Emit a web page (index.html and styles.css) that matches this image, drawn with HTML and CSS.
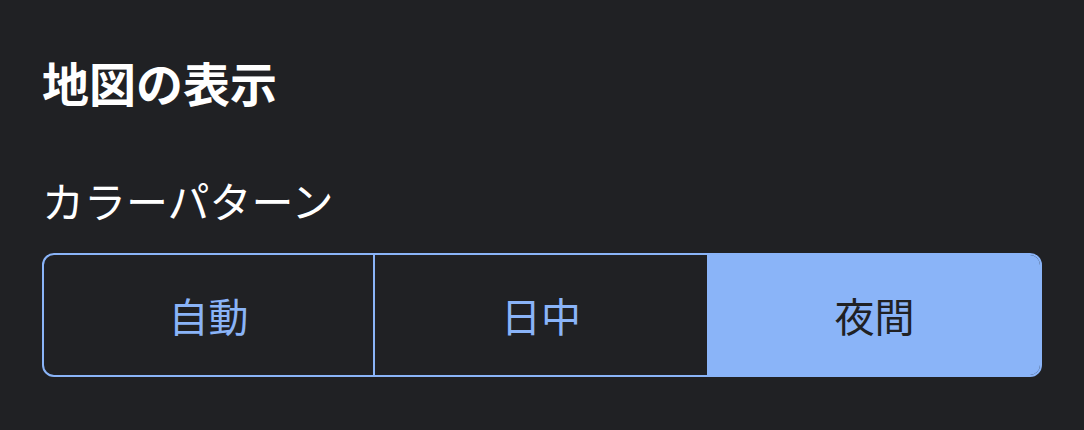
FILE: index.html
```html
<!DOCTYPE html>
<html lang="ja">
<head>
<meta charset="utf-8">
<link rel="stylesheet" href="styles.css">
</head>
<body>
<main class="panel">
  <h1 class="title">地図の表示</h1>
  <h2 class="label">カラーパターン</h2>
  <div class="segmented" role="radiogroup">
    <button class="seg">自動</button>
    <button class="seg">日中</button>
    <button class="seg seg-selected">夜間</button>
  </div>
</main>
</body>
</html>
```

FILE: styles.css
```css
html, body {
  margin: 0;
  background: #202124;
}
body {
  width: 1084px;
  height: 430px;
  overflow: hidden;
  font-family: "Noto Sans CJK JP", "Noto Sans", sans-serif;
}
.panel {
  padding: 54px 42px 0 42px;
}
.title {
  margin: 0;
  font-size: 47px;
  line-height: 56px;
  font-weight: 700;
  color: #ffffff;
}
.label {
  margin: 66px 0 0 0;
  font-size: 42px;
  line-height: 48px;
  font-weight: 400;
  color: #ffffff;
}
.segmented {
  margin-top: 29px;
  display: grid;
  grid-template-columns: 329px 334px 1fr;
  height: 124px;
  box-sizing: border-box;
  border: 2px solid #8ab4f8;
  border-radius: 12px;
  overflow: hidden;
}
.seg {
  margin: 0;
  padding: 0;
  border: none;
  background: transparent;
  font-family: inherit;
  font-size: 40px;
  color: #8ab4f8;
  display: flex;
  align-items: center;
  justify-content: center;
}
.seg + .seg {
  border-left: 2px solid #8ab4f8;
}
.seg-selected {
  background: #8ab4f8;
  color: #202124;
}
```
